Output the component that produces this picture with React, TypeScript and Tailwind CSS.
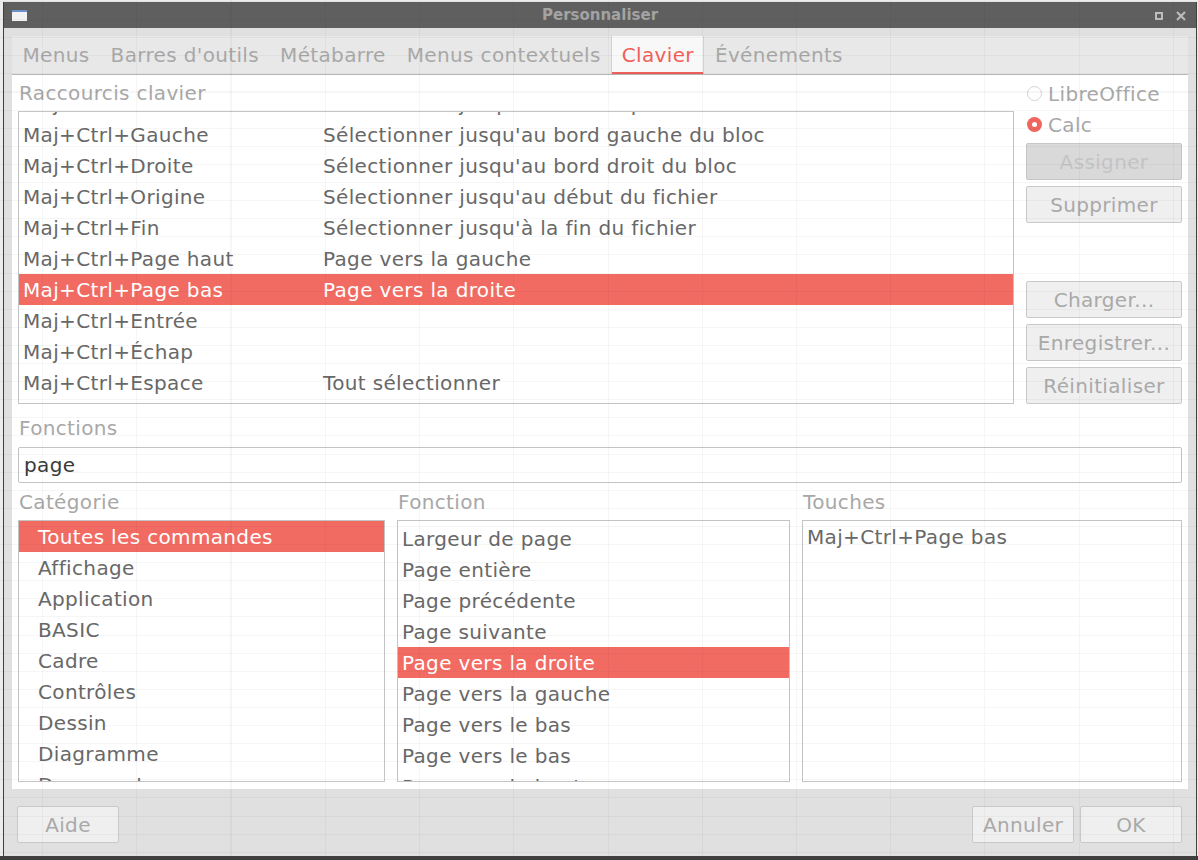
import React from "react";

const font = { fontFamily: '"DejaVu Sans", "Noto Sans", sans-serif' };

const tabs = ["Menus", "Barres d'outils", "Métabarre", "Menus contextuels", "Clavier", "Événements"];

const shortcuts: [string, string][] = [
  ["Maj+Ctrl+Haut", "Sélectionner jusqu'au bord supérieur du bloc"],
  ["Maj+Ctrl+Gauche", "Sélectionner jusqu'au bord gauche du bloc"],
  ["Maj+Ctrl+Droite", "Sélectionner jusqu'au bord droit du bloc"],
  ["Maj+Ctrl+Origine", "Sélectionner jusqu'au début du fichier"],
  ["Maj+Ctrl+Fin", "Sélectionner jusqu'à la fin du fichier"],
  ["Maj+Ctrl+Page haut", "Page vers la gauche"],
  ["Maj+Ctrl+Page bas", "Page vers la droite"],
  ["Maj+Ctrl+Entrée", ""],
  ["Maj+Ctrl+Échap", ""],
  ["Maj+Ctrl+Espace", "Tout sélectionner"],
];

const categories = [
  "Toutes les commandes",
  "Affichage",
  "Application",
  "BASIC",
  "Cadre",
  "Contrôles",
  "Dessin",
  "Diagramme",
  "Documents",
];

const functions = [
  "Largeur de page",
  "Page entière",
  "Page précédente",
  "Page suivante",
  "Page vers la droite",
  "Page vers la gauche",
  "Page vers le bas",
  "Page vers le bas",
  "Page vers le haut",
];

function Button({ label, disabled, className = "" }: { label: string; disabled?: boolean; className?: string }) {
  return (
    <div
      className={`flex h-[37px] items-center justify-center rounded-[2px] border text-[20px] ${
        disabled
          ? "border-[#c6c6c6] bg-[#d9d9d9] text-[#c4c4c4]"
          : "border-[#c9c9c9] bg-[#efefef] text-[#a9a9a9]"
      } ${className}`}
    >
      {label}
    </div>
  );
}

function Radio({ label, checked }: { label: string; checked?: boolean }) {
  return (
    <div className="flex h-[31px] items-center gap-[6px] pl-[1px]">
      {checked ? (
        <span className="flex h-[15px] w-[15px] items-center justify-center rounded-full bg-[#f0665e]">
          <span className="h-[5px] w-[5px] rounded-full bg-white" />
        </span>
      ) : (
        <span className="h-[15px] w-[15px] rounded-full border border-[#d4d4d4] bg-white" />
      )}
      <span className="text-[20px] text-[#a8a8a8]">{label}</span>
    </div>
  );
}

export default function App() {
  return (
    <div className="relative h-[860px] w-[1198px] overflow-hidden bg-[#ececec] tracking-[0.35px]" style={font}>
      <div className="ml-[3px] mt-[2px] flex h-[858px] w-[1194px] flex-col border-x border-[#3f3f3f] bg-[#e0e0e0]">
        {/* title bar */}
        <div className="relative flex h-[26px] shrink-0 items-center justify-center bg-[#5f5f5f]">
          <div className="absolute left-[8px] top-[8px] h-[11px] w-[15px] border-t-2 border-[#6f8fc8] bg-[#f2f2f2]" />
          <span className="text-[15px] font-bold tracking-normal text-[#a3a3a3]">Personnaliser</span>
          <div className="absolute right-[33px] top-[10px] h-[8px] w-[8px] border-2 border-[#bdbdbd]" />
          <svg className="absolute right-[10px] top-[9px]" width="10" height="10" viewBox="0 0 10 10">
            <path d="M1 1L9 9M9 1L1 9" stroke="#bdbdbd" strokeWidth="2" />
          </svg>
        </div>

        {/* body */}
        <div className="flex flex-1 flex-col pl-[8px] pr-[8px] pt-[8px]">
          <div className="flex h-[753px] flex-col">
            {/* tabs */}
            <div className="flex h-[39px] shrink-0 border-b border-[#b4b4b4] bg-[#e8e8e8]">
              {tabs.map((t) =>
                t === "Clavier" ? (
                  <div
                    key={t}
                    className="relative flex items-center border-x border-[#d2d2d2] bg-[#f8f8f8] px-[9.5px] text-[20px] text-[#f0605a]"
                  >
                    {t}
                    <div className="absolute bottom-0 left-0 right-0 h-[2px] bg-[#f0605a]" />
                  </div>
                ) : (
                  <div key={t} className="flex items-center px-[10.5px] text-[20px] text-[#a8a8a8]">
                    {t}
                  </div>
                )
              )}
            </div>

            {/* content */}
            <div className="flex flex-1 flex-col bg-white px-[6px] pb-[7px]">
              <div className="flex gap-[12px]">
                <div className="flex flex-1 flex-col">
                  <div className="flex h-[36px] items-center pl-[1px] text-[20px] text-[#a8a8a8]">Raccourcis clavier</div>
                  <div className="h-[293px] overflow-hidden border border-[#c4c4c4]">
                    <div className="mt-[-24px]">
                      {shortcuts.map(([k, f]) => {
                        const sel = k === "Maj+Ctrl+Page bas";
                        return (
                          <div
                            key={k}
                            className={`flex h-[31px] items-center pl-[4px] text-[20px] ${
                              sel ? "bg-[#f26b63] text-white" : "text-[#686868]"
                            }`}
                          >
                            <span className="w-[300px] whitespace-nowrap">{k}</span>
                            <span className="whitespace-nowrap">{f}</span>
                          </div>
                        );
                      })}
                    </div>
                  </div>
                </div>
                <div className="flex w-[156px] flex-col pt-[3px]">
                  <Radio label="LibreOffice" />
                  <Radio label="Calc" checked />
                  <Button label="Assigner" disabled className="mt-[3px]" />
                  <Button label="Supprimer" className="mt-[6px]" />
                  <Button label="Charger..." className="mt-[58px]" />
                  <Button label="Enregistrer..." className="mt-[6px]" />
                  <Button label="Réinitialiser" className="mt-[6px]" />
                </div>
              </div>

              <div className="flex h-[43px] items-center pl-[1px] pt-[5px] text-[20px] text-[#a8a8a8]">Fonctions</div>
              <div className="flex h-[36px] items-center rounded-[2px] border border-[#c4c4c4] pl-[5px] text-[20px] text-[#3a3a3a]">
                page
              </div>

              <div className="flex gap-[12px]">
                <div className="flex w-[367px] flex-col">
                  <div className="flex h-[37px] items-center pl-[1px] text-[20px] text-[#a8a8a8]">Catégorie</div>
                  <div className="h-[262px] overflow-hidden border border-[#c4c4c4]">
                    {categories.map((c, i) => (
                      <div
                        key={c}
                        className={`flex h-[31px] shrink-0 items-center pl-[19px] text-[20px] ${
                          i === 0 ? "bg-[#f26b63] text-white" : "text-[#686868]"
                        }`}
                      >
                        {c}
                      </div>
                    ))}
                  </div>
                </div>
                <div className="flex w-[393px] flex-col">
                  <div className="flex h-[37px] items-center pl-[1px] text-[20px] text-[#a8a8a8]">Fonction</div>
                  <div className="h-[262px] overflow-hidden border border-[#c4c4c4] pt-[2px]">
                    {functions.map((f, i) => (
                      <div
                        key={i}
                        className={`flex h-[31px] items-center pl-[4px] text-[20px] ${
                          i === 4 ? "bg-[#f26b63] text-white" : "text-[#686868]"
                        }`}
                      >
                        {f}
                      </div>
                    ))}
                  </div>
                </div>
                <div className="flex flex-1 flex-col">
                  <div className="flex h-[37px] items-center pl-[1px] text-[20px] text-[#a8a8a8]">Touches</div>
                  <div className="h-[262px] overflow-hidden border border-[#c4c4c4]">
                    <div className="flex h-[31px] items-center pl-[4px] text-[20px] text-[#686868]">Maj+Ctrl+Page bas</div>
                  </div>
                </div>
              </div>
            </div>
          </div>

          {/* footer */}
          <div className="flex flex-1 items-start justify-between pl-[5px] pr-[6px] pt-[17px]">
            <Button label="Aide" className="w-[102px]" />
            <div className="flex gap-[6px]">
              <Button label="Annuler" className="w-[102px]" />
              <Button label="OK" className="w-[102px]" />
            </div>
          </div>
        </div>
      </div>
      {/* faint spreadsheet grid showing through the translucent window */}
      <div className="pointer-events-none absolute inset-0 [background-image:repeating-linear-gradient(90deg,transparent_0_42px,rgba(0,0,0,0.035)_42px_43px,transparent_43px_94.25px),repeating-linear-gradient(180deg,transparent_0_1px,rgba(0,0,0,0.035)_1px_2px,transparent_2px_18.1px)]" />
      <div className="pointer-events-none absolute bottom-0 left-0 right-0 h-[4px] bg-[#3f3f3f]" />
    </div>
  );
}
